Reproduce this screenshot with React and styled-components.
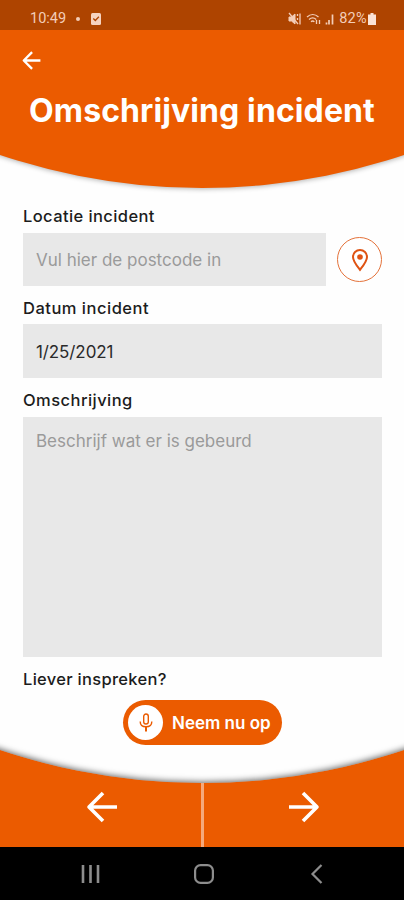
import React from "react";
import styled, { createGlobalStyle, css } from "styled-components";

const orange = "#eb5b00";

const GlobalStyle = createGlobalStyle`
  * {
    box-sizing: border-box;
  }
  body {
    margin: 0;
    background: #fff;
    font-family: "Inter", "Liberation Sans", sans-serif;
  }
  button, input, textarea {
    font: inherit;
    margin: 0;
    border: none;
    outline: none;
  }
`;

const ArrowIcon = ({ size, stroke, flip }) => (
  <svg
    width={size}
    height={size}
    viewBox="0 0 32 32"
    fill="none"
    stroke="#fff"
    strokeWidth={stroke}
    strokeLinejoin="round"
    transform={flip ? "scale(-1 1)" : undefined}
  >
    <path d="M31 16H3M17 2L3 16l14 14" />
  </svg>
);

const StatusIcons = () => (
  <svg width="51" height="14" viewBox="0 0 51 14" fill="none" stroke="#f3cdb8">
    <path d="M1 5h2.500l3.500-3v10l-3.500-3H1z" fill="#f3cdb8" />
    <path d="M1 1l9 11" strokeWidth="1.300" />
    <path d="M9.500 2v2M9.500 6v2M12 1.500v11" strokeWidth="1.300" />
    <path d="M19 5c3.500-3.200 8-3.200 11.500 0M21 7.500c2.300-2 5-2 7.200 0M23 9.700c1-.8 2.400-.8 3.400 0" strokeWidth="1.300" />
    <path d="M28.500 12V8M31.500 8v4" strokeWidth="1.300" />
    <path d="M38.500 12.500v-2M41 12.500V8M44.500 12.500V2.500" strokeWidth="1.700" />
  </svg>
);

const App = () => {
  return (
    <Screen>
      <GlobalStyle />
      <StatusBar>
        <StatusGroup>
          <StatusText>10:49</StatusText>
          <Dot />
          <svg width="10" height="12" viewBox="0 0 10 12">
            <rect width="10" height="12" rx="1.5" fill="#f6d3c0" />
            <path d="M2.300 5.500l2 2 3.600-3.700" fill="none" stroke="#ae4400" strokeWidth="1.300" />
          </svg>
        </StatusGroup>
        <StatusGroup>
          <StatusIcons />
          <StatusText $spacing="0.3px">82%</StatusText>
          <Battery width="8" height="12" viewBox="0 0 8 12">
            <path d="M2.500 0h3v1.500H8V12H0V1.500h2.500z" />
          </Battery>
        </StatusGroup>
      </StatusBar>

      <Header>
        <BackButton type="button" aria-label="Terug">
          <ArrowIcon size={19} stroke={4} />
        </BackButton>
        <Title>Omschrijving incident</Title>
      </Header>

      <Form onSubmit={(e) => e.preventDefault()}>
        <Label htmlFor="location" $top="5px">
          Locatie incident
        </Label>
        <LocationRow>
          <Input id="location" placeholder="Vul hier de postcode in" />
          <PinButton type="button" aria-label="Locatie">
            <svg width="18" height="24" viewBox="0 0 18 24" fill="none">
              <path
                d="M9 21.800C5.500 17.300 2 13.200 2 9a7 7 0 0 1 14 0c0 4.200-3.500 8.300-7 12.800z"
                stroke="#df5313"
                strokeWidth="2"
              />
              <circle cx="9" cy="9" r="2.800" fill="#df5313" />
            </svg>
          </PinButton>
        </LocationRow>

        <Label htmlFor="date" $spacing="0.5px">
          Datum incident
        </Label>
        <Input id="date" $tall $spacing="-0.1px" defaultValue="1/25/2021" />

        <Label htmlFor="description" $height="39px" $spacing="0.45px">
          Omschrijving
        </Label>
        <TextArea id="description" placeholder="Beschrijf wat er is gebeurd" />

        <Label as="p" $height="43px" $spacing="0.3px">
          Liever inspreken?
        </Label>
        <RecordButton type="button">
          <MicCircle>
            <svg width="14" height="19" viewBox="0 0 14 19" fill="none" stroke={orange} strokeWidth="1.400">
              <rect x="4.700" y="1" width="4.600" height="10" rx="2.300" />
              <path d="M1.200 8.500c0 3.200 2.300 5.300 5.800 5.300s5.800-2.100 5.800-5.300" />
              <path d="M7 14v4.500" strokeWidth="2" />
            </svg>
          </MicCircle>
          Neem nu op
        </RecordButton>
      </Form>

      <Footer>
        <FooterButton type="button" aria-label="Vorige" $width="201px" $shift="2px">
          <ArrowIcon size={32} stroke={3.6} />
        </FooterButton>
        <Divider />
        <FooterButton type="button" aria-label="Volgende" $width="200px">
          <ArrowIcon size={32} stroke={3.6} flip />
        </FooterButton>
      </Footer>

      <NavBar>
        <svg width="20" height="20" viewBox="0 0 20 20" stroke="#8d8d8d" strokeWidth="2.600">
          <path d="M3 1v18M10.500 1v18M18 1v18" />
        </svg>
        <svg width="20" height="20" viewBox="0 0 20 20" fill="none" stroke="#8d8d8d" strokeWidth="2.200">
          <rect x="1.100" y="1.100" width="17.800" height="17.800" rx="5.500" />
        </svg>
        <svg width="20" height="20" viewBox="0 0 20 20" fill="none" stroke="#8d8d8d" strokeWidth="2.200">
          <path d="M14.500 1l-9 9 9 9" />
        </svg>
      </NavBar>
    </Screen>
  );
};

const Screen = styled.div`
  width: 404px;
  height: 900px;
  display: flex;
  flex-direction: column;
  overflow: hidden;
  background: #fefefe;
`;

const StatusBar = styled.div`
  flex: none;
  height: 30px;
  padding: 8px 28px 0 30px;
  display: flex;
  justify-content: space-between;
  align-items: flex-start;
  background: #ae4400;
  position: relative;
  z-index: 1;
`;

const StatusGroup = styled.div`
  height: 22px;
  display: flex;
  align-items: center;
  svg {
    flex: none;
  }
`;

const StatusText = styled.span`
  font-family: Roboto, sans-serif;
  font-size: 14.5px;
  line-height: 22px;
  letter-spacing: ${({ $spacing }) => $spacing || "0"};
  color: #f3cdb8;
`;

const Battery = styled.svg`
  margin-left: 1px;
  fill: #fbe3d6;
`;

const Dot = styled.i`
  width: 4px;
  height: 4px;
  margin: 0 11px 0 10px;
  border-radius: 50%;
  background: #f3cdb8;
`;

/* circle wide enough that only its lower arc shows */
const arc = css`
  content: "";
  position: absolute;
  left: 50%;
  width: 1272px;
  height: 1272px;
  margin-left: -636px;
  border-radius: 50%;
`;

const Header = styled.header`
  flex: none;
  height: 165px;
  display: flex;
  flex-direction: column;
  position: relative;
  z-index: 0;
  overflow: hidden;
  &::before {
    ${arc}
    bottom: 7px;
    z-index: -1;
    background: ${orange};
    box-shadow: 0 1px 5px rgba(0, 0, 0, 0.3);
  }
`;

const BackButton = styled.button`
  width: 19px;
  height: 19px;
  margin: 21px 0 0 22px;
  padding: 0;
  display: flex;
  background: none;
`;

const Title = styled.h1`
  margin: 21px 0 0;
  font-size: 32px;
  line-height: 40px;
  font-weight: 700;
  letter-spacing: 0.1px;
  text-align: center;
  white-space: nowrap;
  color: #fff;
`;

const Form = styled.form`
  flex: none;
  height: 550px;
  padding: 0 22px 0 23px;
  display: flex;
  flex-direction: column;
  position: relative;
  z-index: 1;
`;

const Label = styled.label`
  flex: none;
  display: block;
  margin: 0;
  height: ${({ $height }) => $height || "38px"};
  padding-top: ${({ $top }) => $top || "6px"};
  font-size: 16.5px;
  line-height: 32px;
  font-weight: 500;
  letter-spacing: ${({ $spacing }) => $spacing || "0.4px"};
  color: #1c1c1c;
`;

const LocationRow = styled.div`
  display: flex;
  align-items: center;
  gap: 11px;
`;

const field = css`
  width: 100%;
  background: #e8e8e8;
  border-radius: 0;
  color: #2a2a2a;
  font-size: 17px;
  letter-spacing: ${({ $spacing }) => $spacing || "0"};
  &::placeholder {
    color: #9a9a9a;
    opacity: 1;
  }
`;

const Input = styled.input`
  ${field}
  flex: ${({ $tall }) => ($tall ? "none" : 1)};
  min-width: 0;
  height: ${({ $tall }) => ($tall ? "54px" : "53px")};
  padding: ${({ $tall }) => ($tall ? "2px 13px 0" : "0 13px")};
`;

const TextArea = styled.textarea`
  ${field}
  flex: none;
  height: 240px;
  padding: 13px;
  line-height: 22px;
  resize: none;
`;

const PinButton = styled.button`
  flex: none;
  width: 45px;
  height: 45px;
  padding: 0;
  display: flex;
  align-items: center;
  justify-content: center;
  border: 1px solid #e4723a;
  border-radius: 50%;
  background: #fff;
`;

const RecordButton = styled.button`
  flex: none;
  align-self: center;
  width: 159px;
  height: 45px;
  padding: 0 0 0 5px;
  display: flex;
  align-items: center;
  gap: 9px;
  border-radius: 23px;
  background: ${orange};
  color: #fff;
  font-size: 17px;
  font-weight: 600;
  white-space: nowrap;
`;

const MicCircle = styled.span`
  flex: none;
  width: 35px;
  height: 35px;
  display: flex;
  align-items: center;
  justify-content: center;
  border-radius: 50%;
  background: #fff;
`;

const Footer = styled.footer`
  flex: none;
  height: 109px;
  margin-top: -7px;
  display: flex;
  align-items: flex-end;
  position: relative;
  z-index: 0;
  overflow: hidden;
  background: ${orange};
  &::before {
    ${arc}
    bottom: 64px;
    z-index: -1;
    background: #fefefe;
    box-shadow: inset 0 -1px 6px rgba(0, 0, 0, 0.6);
  }
`;

const FooterButton = styled.button`
  flex: none;
  width: ${({ $width }) => $width};
  height: 65px;
  padding: 9px 0 0 ${({ $shift }) => $shift || "0"};
  display: flex;
  justify-content: center;
  background: none;
`;

const Divider = styled.div`
  width: 3px;
  height: 64px;
  background: #f5a97c;
`;

const NavBar = styled.nav`
  flex: 1;
  padding: 0 77px 0 80px;
  display: flex;
  align-items: center;
  justify-content: space-between;
  background: #000;
`;

export default App;
